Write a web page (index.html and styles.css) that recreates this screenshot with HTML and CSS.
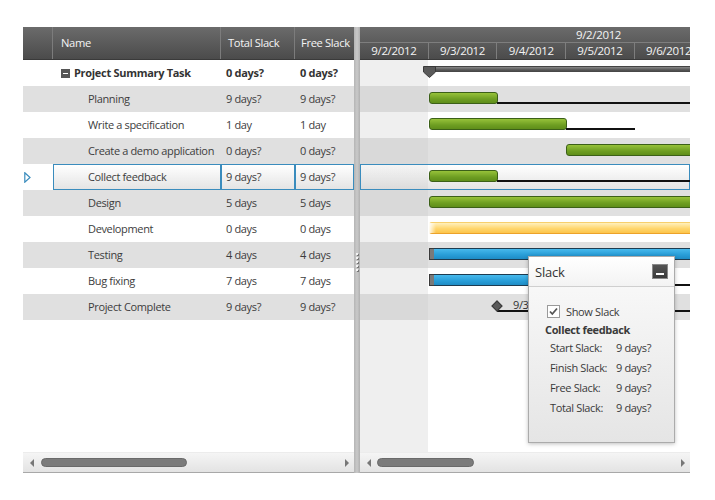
FILE: index.html
```html
<!DOCTYPE html>
<html>
<head>
<meta charset="utf-8">
<link rel="stylesheet" href="styles.css">
</head>
<body>
<div class="gantt">
  <div class="grid">
    <div class="g-head">
      <div class="hc ind"></div>
      <div class="hc name">Name</div>
      <div class="hc total">Total Slack</div>
      <div class="hc free">Free Slack</div>
    </div>
    <div class="g-body">
      <div class="row summary">
        <div class="c ind"></div>
        <div class="c name"><span class="toggle"></span>Project Summary Task</div>
        <div class="c total">0 days?</div>
        <div class="c free">0 days?</div>
      </div>
      <div class="row alt">
        <div class="c ind"></div>
        <div class="c name child">Planning</div>
        <div class="c total">9 days?</div>
        <div class="c free">9 days?</div>
      </div>
      <div class="row">
        <div class="c ind"></div>
        <div class="c name child">Write a specification</div>
        <div class="c total">1 day</div>
        <div class="c free">1 day</div>
      </div>
      <div class="row alt">
        <div class="c ind"></div>
        <div class="c name child">Create a demo application</div>
        <div class="c total">0 days?</div>
        <div class="c free">0 days?</div>
      </div>
      <div class="row selected">
        <div class="c ind"><svg class="arrow" width="7" height="11" viewBox="0 0 7 11"><path d="M0.8 0.8 L6 5.5 L0.8 10.2 Z" fill="none" stroke="#3a8cbd" stroke-width="1.2"/></svg></div>
        <div class="c name child">Collect feedback</div>
        <div class="c total">9 days?</div>
        <div class="c free">9 days?</div>
      </div>
      <div class="row alt">
        <div class="c ind"></div>
        <div class="c name child">Design</div>
        <div class="c total">5 days</div>
        <div class="c free">5 days</div>
      </div>
      <div class="row">
        <div class="c ind"></div>
        <div class="c name child">Development</div>
        <div class="c total">0 days</div>
        <div class="c free">0 days</div>
      </div>
      <div class="row alt">
        <div class="c ind"></div>
        <div class="c name child">Testing</div>
        <div class="c total">4 days</div>
        <div class="c free">4 days</div>
      </div>
      <div class="row">
        <div class="c ind"></div>
        <div class="c name child">Bug fixing</div>
        <div class="c total">7 days</div>
        <div class="c free">7 days</div>
      </div>
      <div class="row alt">
        <div class="c ind"></div>
        <div class="c name child">Project Complete</div>
        <div class="c total">9 days?</div>
        <div class="c free">9 days?</div>
      </div>
    </div>
    <div class="hscroll">
      <span class="arr left"></span>
      <span class="thumb grid-thumb"></span>
      <span class="fill"></span>
      <span class="arr right"></span>
    </div>
  </div>

  <div class="splitter"><div class="grip"><i></i><i></i><i></i><i></i><i></i></div></div>

  <div class="chart">
    <div class="c-head">
      <div class="c-top"><span>9/2/2012</span></div>
      <div class="c-days">
        <div class="day">9/2/2012</div>
        <div class="day">9/3/2012</div>
        <div class="day">9/4/2012</div>
        <div class="day">9/5/2012</div>
        <div class="day">9/6/2012</div>
      </div>
    </div>
    <div class="c-body">
      <div class="crow">
        <div class="sum-bar" style="left:68px;width:270px"></div>
        <svg class="sum-mark" width="13" height="12" viewBox="0 0 13 12"><path d="M0.5 0.5 H12.5 V6 L6.5 11.5 L0.5 6 Z" fill="#5a5a5a" stroke="#3a3a3a"/></svg>
      </div>
      <div class="crow alt">
        <div class="bar green" style="left:69px;width:69px"></div>
        <div class="slack" style="left:137px;width:200px"></div>
      </div>
      <div class="crow">
        <div class="bar green" style="left:69px;width:138px"></div>
        <div class="slack" style="left:206px;width:69px"></div>
      </div>
      <div class="crow alt">
        <div class="bar green" style="left:206px;width:140px"></div>
      </div>
      <div class="crow selected">
        <div class="bar green" style="left:68px;width:69px"></div>
        <div class="slack" style="left:136px;width:200px"></div>
      </div>
      <div class="crow alt">
        <div class="bar green" style="left:69px;width:280px"></div>
      </div>
      <div class="crow">
        <div class="bar yellow" style="left:69px;width:280px"></div>
      </div>
      <div class="crow alt">
        <div class="bar blue" style="left:69px;width:280px"></div>
        <div class="cap" style="left:69px"></div>
      </div>
      <div class="crow">
        <div class="slack" style="left:160px;width:180px"></div>
        <div class="bar blue" style="left:69px;width:110px"></div>
        <div class="cap" style="left:69px"></div>
      </div>
      <div class="crow alt">
        <div class="slack" style="left:137px;width:200px;top:16px"></div>
        <div class="diamond" style="left:133px"></div>
        <span class="ms-label" style="left:153px">9/3/2012</span>
      </div>
    </div>
    <div class="hscroll">
      <span class="arr left"></span>
      <span class="thumb chart-thumb"></span>
      <span class="fill"></span>
      <span class="arr right"></span>
    </div>
  </div>

  <div class="popup">
    <div class="p-head">
      <span class="p-title">Slack</span>
      <span class="p-btn"></span>
    </div>
    <div class="p-body">
      <div class="chk-line">
        <svg class="chk" width="13" height="13" viewBox="0 0 13 13"><rect x="0.5" y="0.5" width="12" height="12" fill="#fff" stroke="#9a9a9a"/><path d="M3 6.5 L5.3 9 L10 3.5" fill="none" stroke="#555" stroke-width="1.8"/></svg>
        <span>Show Slack</span>
      </div>
      <div class="p-task">Collect feedback</div>
      <div class="kv"><span class="k">Start Slack:</span><span>9 days?</span></div>
      <div class="kv"><span class="k">Finish Slack:</span><span>9 days?</span></div>
      <div class="kv"><span class="k">Free Slack:</span><span>9 days?</span></div>
      <div class="kv"><span class="k">Total Slack:</span><span>9 days?</span></div>
    </div>
  </div>
</div>
</body>
</html>
```

FILE: styles.css
```css
* { box-sizing: border-box; }
body {
  margin: 0;
  font-family: "Open Sans", "Noto Sans", sans-serif;
  font-size: 11px;
  letter-spacing: -0.35px;
  color: #3d3d3d;
  background: #fff;
}
.gantt {
  position: relative;
  display: flex;
  margin: 27px 0 0 23px;
  width: 667px;
  height: 446px;
}
.grid {
  width: 331px;
  display: flex;
  flex-direction: column;
}
.g-head {
  display: flex;
  height: 33px;
  background: linear-gradient(#6b6b6b, #4b4b4b);
  border-bottom: 1px solid #3a3a3a;
  color: #f4f4f4;
  font-size: 11.2px;
}
.hc {
  line-height: 32px;
  border-right: 1px solid #7c7c7c;
  white-space: nowrap;
  overflow: hidden;
}
.g-head .total { padding-left: 7px; }
.g-head .free { padding-left: 6px; }
.ind { width: 30px; flex: none; }
.name { width: 168px; flex: none; padding-left: 8px; }
.total { width: 74px; flex: none; padding-left: 5px; }
.free { width: 59px; flex: none; padding-left: 5px; border-right: none; }
.g-body { flex: 1; }
.row {
  display: flex;
  height: 26px;
  line-height: 26px;
  white-space: nowrap;
}
.row.alt { background: #e0e0e0; }
.c { overflow: hidden; }
.c.name.child { padding-left: 35px; }
.summary { font-weight: bold; color: #333; letter-spacing: -0.3px; }
.toggle {
  display: inline-block;
  width: 9px;
  height: 9px;
  background: #555;
  margin-right: 4px;
  vertical-align: -1px;
  position: relative;
}
.toggle::after {
  content: "";
  position: absolute;
  left: 2px;
  top: 4px;
  width: 5px;
  height: 1px;
  background: #fff;
}
.row.selected .c.ind { display: flex; align-items: center; padding-left: 1px; }
.row.selected .c.name,
.row.selected .c.total,
.row.selected .c.free {
  border: 1px solid #3a8cbd;
  background: linear-gradient(#ffffff, #e4e4e4);
  line-height: 24px;
}
.row.selected .c.total,
.row.selected .c.free { padding-left: 4px; }
.row.selected .c.name.child { padding-left: 34px; }

.hscroll {
  height: 21px;
  display: flex;
  align-items: center;
  padding: 0 5px 0 7px;
  background: linear-gradient(#f5f5f5, #e3e3e3);
  border-top: 1px solid #ececec;
  border-bottom: 1px solid #a8a8a8;
}
.arr {
  width: 0;
  height: 0;
  border-top: 4px solid transparent;
  border-bottom: 4px solid transparent;
  flex: none;
}
.arr.left { border-right: 4px solid #777; }
.arr.right { border-left: 4px solid #777; }
.thumb {
  height: 9px;
  border-radius: 5px;
  background: #7b7b7b;
  border: 1px solid #6a6a6a;
  flex: none;
}
.grid-thumb { width: 146px; margin-left: 7px; }
.chart-thumb { width: 97px; margin-left: 6px; }
.fill { flex: 1; }

.splitter {
  width: 6px;
  flex: none;
  background: linear-gradient(to right, #b5b5b5, #c9c9c9 50%, #b0b0b0);
  display: flex;
  align-items: center;
  justify-content: center;
  padding-top: 24px;
}
.grip { display: flex; flex-direction: column; gap: 2px; }
.grip i {
  display: block;
  width: 2px;
  height: 2px;
  background: #f4f4f4;
  box-shadow: 1px 1px 0 #777;
}

.chart {
  width: 330px;
  flex: none;
  display: flex;
  flex-direction: column;
  overflow: hidden;
}
.c-head {
  height: 33px;
  background: linear-gradient(#6b6b6b, #4b4b4b);
  border-bottom: 1px solid #3a3a3a;
  color: #f4f4f4;
  font-size: 11.5px;
}
.c-top {
  height: 16px;
  line-height: 16px;
  padding-left: 216px;
  border-bottom: 1px solid #7e7e7e;
}
.c-days { display: flex; height: 16px; line-height: 15px; }
.day {
  width: 68.7px;
  flex: none;
  text-align: center;
  border-right: 1px solid #7e7e7e;
}
.c-body {
  flex: 1;
  background: linear-gradient(to right, #efefef 68px, #ffffff 68px);
}
.crow {
  position: relative;
  height: 26px;
}
.crow.alt { background: linear-gradient(to right, #d9d9d9 68px, #e0e0e0 68px); }
.crow.selected {
  border: 1px solid #3a8cbd;
  background: linear-gradient(to right, rgba(0,0,0,0.04) 67px, rgba(0,0,0,0) 67px), linear-gradient(#ffffff, #e4e4e4);
}
.crow.selected .bar { top: 5px; }
.crow.selected .slack { top: 15px; }
.bar {
  position: absolute;
  top: 6px;
  height: 12px;
}
.green {
  background: linear-gradient(#97c23a, #6e9e22 60%, #5f8e1a);
  border: 1px solid #3c6018;
  border-radius: 3px;
}
.yellow {
  background: linear-gradient(#fff0bd, #ffd66e 55%, #fcc44a);
  border-top: 1px solid #f7cf6c;
  border-bottom: 1px solid #eca22a;
  border-radius: 3px 0 0 3px;
}
.yellow::before {
  content: "";
  position: absolute;
  left: 0;
  top: 0;
  bottom: 0;
  width: 7px;
  background: linear-gradient(to right, rgba(255,255,255,0.95), rgba(255,255,255,0));
}
.blue {
  background: linear-gradient(#48b9ec, #2a9fd9 55%, #1e8cc5);
  border: 1px solid #1d3b50;
}
.cap {
  position: absolute;
  top: 6px;
  width: 5px;
  height: 12px;
  background: #7a7a7a;
  border: 1px solid #3a3a3a;
  border-right-width: 0;
}
.slack {
  position: absolute;
  top: 16px;
  height: 2px;
  background: #111;
}
.sum-bar {
  position: absolute;
  top: 6px;
  height: 6px;
  background: linear-gradient(#8a8a8a, #555 60%, #444);
  border-top: 1px solid #444;
}
.sum-mark {
  position: absolute;
  left: 63px;
  top: 6px;
}
.diamond {
  position: absolute;
  top: 8px;
  width: 8px;
  height: 8px;
  background: #5a5a5a;
  border: 1px solid #3a3a3a;
  transform: rotate(45deg);
}
.ms-label {
  position: absolute;
  top: 4px;
  line-height: 14px;
  color: #333;
}

.popup {
  position: absolute;
  left: 505px;
  top: 229px;
  width: 147px;
  height: 187px;
  border: 1px solid #ababab;
  box-shadow: 0 1px 4px rgba(0,0,0,0.25);
  background: linear-gradient(#fbfbfb, #e5e5e5);
  display: flex;
  flex-direction: column;
}
.p-head {
  height: 30px;
  display: flex;
  align-items: center;
  justify-content: space-between;
  padding: 0 6px 0 6px;
  background: linear-gradient(#ffffff, #f3f3f3);
  border-bottom: 1px solid #cfcfcf;
}
.p-title { font-size: 13px; color: #333; letter-spacing: -0.2px; }
.p-btn {
  width: 16px;
  height: 15px;
  background: linear-gradient(#555, #3a3a3a);
  border: 1px solid #8a8a8a;
  position: relative;
}
.p-btn::after {
  content: "";
  position: absolute;
  left: 3px;
  right: 3px;
  bottom: 3px;
  height: 2px;
  background: #fff;
}
.p-body {
  padding: 17px 0 0 16px;
  color: #3a3a3a;
}
.chk-line {
  display: flex;
  align-items: center;
  gap: 6px;
  height: 14px;
  margin-left: 2px;
}
.p-task {
  font-weight: bold;
  margin: 4px 0 0 0;
  line-height: 16px;
}
.kv {
  display: flex;
  line-height: 20px;
  padding-left: 5px;
}
.kv:first-of-type { margin-top: 2px; }
.k { width: 66px; flex: none; }
```
